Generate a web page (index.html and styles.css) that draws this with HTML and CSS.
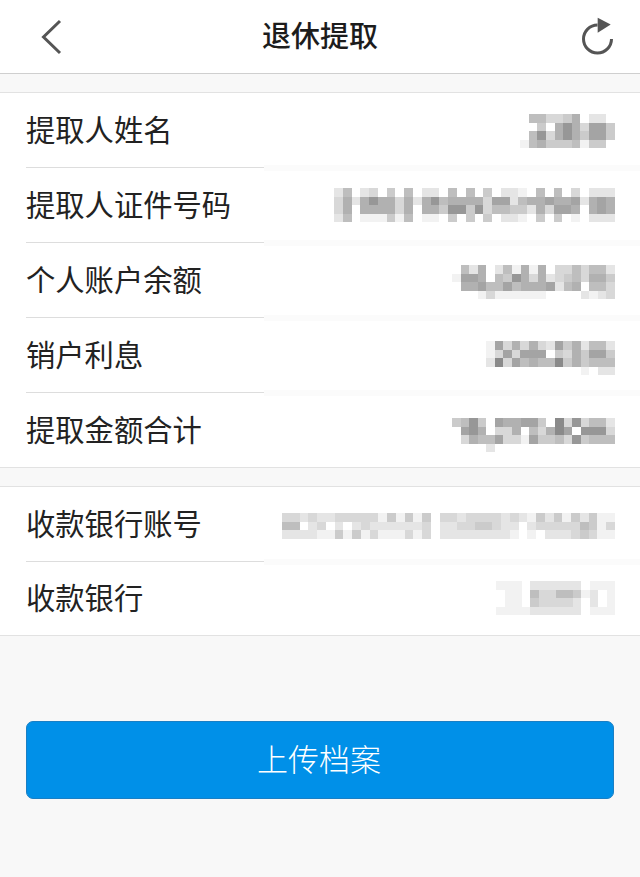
FILE: index.html
```html
<!DOCTYPE html>
<html>

<head lang="zh-CN">
    <meta charset="UTF-8">
    <title>退休提取</title>
    <link rel="stylesheet" href="styles.css">
    <script src="mosaic.js"></script>
</head>

<body>
    <div class="nav">
        <a class="nav_btn nav_back" href="javascript:">
            <svg width="24" height="36" viewBox="0 0 24 36">
                <path d="M20 2 L3.5 18 L20 34" fill="none" stroke="#555" stroke-width="3" />
            </svg>
        </a>
        <div class="nav_title">退休提取</div>
        <a class="nav_btn nav_refresh" href="javascript:">
            <svg width="34" height="40" viewBox="-1 1.5 34 40">
                <path d="M16.5 9.5 A14 14 0 1 0 30.5 23.5" fill="none" stroke="#555" stroke-width="3" />
                <path d="M16.7 2.3 L29.7 9 L16.7 17.3 Z" fill="#555" />
            </svg>
        </a>
    </div>

    <div class="group">
        <div class="row">
            <div class="label">提取人姓名</div>
            <div class="value">
                <div class="mosaic low_a" data-width="95"
                    data-rows="05533460220 00406863774 05836864774 15644451440"></div>
            </div>
        </div>
        <div class="row">
            <div class="label">提取人证件号码</div>
            <div class="value">
                <div class="mosaic" data-width="281"
                    data-rows="25023040502205050402210505030222 36268663626856666377256676672676 36066663606648848355442637760676 25011141501104040402210404010222"></div>
            </div>
        </div>
        <div class="row">
            <div class="label">个人账户余额</div>
            <div class="value">
                <div class="mosaic low_c" data-width="163"
                    data-rows="0526025161603353552 1776054863623453664 0667557566672560553 0001311111100002123"></div>
            </div>
        </div>
        <div class="row">
            <div class="label">销户利息</div>
            <div class="value">
                <div class="mosaic low_b" data-width="129"
                    data-rows="173636327462552 137377704364774 293756559464555 000000000001022"></div>
            </div>
        </div>
        <div class="row">
            <div class="label">提取金额合计</div>
            <div class="value">
                <div class="mosaic low_d" data-width="163"
                    data-rows="4584076677409383552 0786033605369708883 0365573317445384555 0000200000000000000"></div>
            </div>
        </div>
    </div>

    <div class="group group_second">
        <div class="row">
            <div class="label">收款银行账号</div>
            <div class="value">
                <div class="mosaic low_c" data-width="333"
                    data-rows="33232233333141414033233332321424142411 55023020232222223022334432202333335413 22221141413111313022222222101022234311"></div>
            </div>
        </div>
        <div class="row">
            <div class="label">收款银行</div>
            <div class="value">
                <div class="mosaic" data-width="119"
                    data-rows="11102222220111 01105335541201 01104333320201 11112222220111"></div>
            </div>
        </div>
    </div>

    <div class="btn_wrap">
        <a class="upload_btn" href="javascript:">上传档案</a>
    </div>
</body>

</html>
```

FILE: styles.css
```css
* {
    margin: 0;
    padding: 0;
    box-sizing: border-box;
}

body {
    background-color: #f8f8f8;
    font-family: "Noto Sans CJK SC", "Liberation Sans", sans-serif;
    color: #222;
}

a {
    text-decoration: none;
}

.nav {
    height: 74px;
    padding: 0 26px;
    display: grid;
    grid-template-columns: 1fr auto 1fr;
    align-items: center;
    background-color: #fff;
    border-bottom: 1px solid #cfcfcf;
}

.nav_btn {
    display: flex;
}

.nav_back {
    padding-left: 14px;
}

.nav_refresh {
    justify-content: flex-end;
}

.nav_title {
    padding-bottom: 5px;
    font-size: 29px;
    font-weight: 500;
    color: #1c1c1c;
}

.group {
    margin-top: 18px;
    background-color: #fff;
    border-top: 1px solid #e2e2e2;
    border-bottom: 1px solid #e2e2e2;
}

.row {
    height: 75px;
    padding-left: 26px;
    display: flex;
}

.group .row:last-child {
    height: 74px;
}

.group_second .row:last-child {
    height: 73px;
}

.label {
    width: 238px;
    font-size: 29.3px;
    line-height: 70px;
    border-bottom: 1px solid #ddd;
    white-space: nowrap;
}

.row:last-child .label {
    border-bottom: none;
}

.group_second .row:last-child .label {
    line-height: 68px;
}

.value {
    flex: 1;
    padding-right: 25px;
    display: flex;
    justify-content: flex-end;
    align-items: center;
    box-shadow: inset 0 -3px 0 #fbfbfb, 0 3px 0 #fbfbfb;
}

.row:last-child .value {
    box-shadow: none;
}

.mosaic svg {
    display: block;
    filter: blur(0.6px);
}

/* 马赛克在行内的上下偏移 */
.low_a {
    margin-top: 2px;
}

.low_b {
    margin-top: 6px;
}

.low_c {
    margin-top: 3px;
}

.low_d {
    margin-top: 10px;
}

.btn_wrap {
    padding: 85px 26px 78px;
}

.upload_btn {
    display: block;
    height: 78px;
    padding-right: 2px;
    line-height: 72px;
    text-align: center;
    font-size: 31px;
    font-weight: 300;
    color: #fff;
    background-color: #0090e8;
    border: 1px solid #1a7fc4;
    border-radius: 7px;
}
```

FILE: mosaic.js
```js
window.onload = function () {
    var boxes = document.getElementsByClassName('mosaic');
    var cell_height = 8.6;
    var ns = 'http://www.w3.org/2000/svg';

    for (var i = 0; i < boxes.length; i++) {
        // 每行一串数字，0是空白，数字越大灰度越深
        var rows = boxes[i].getAttribute('data-rows').split(' ');
        var cols = rows[0].length;
        var svg = document.createElementNS(ns, 'svg');
        svg.setAttribute('width', boxes[i].getAttribute('data-width'));
        svg.setAttribute('height', rows.length * cell_height);
        svg.setAttribute('viewBox', '0 0 ' + cols + ' ' + rows.length);
        svg.setAttribute('preserveAspectRatio', 'none');
        svg.setAttribute('shape-rendering', 'crispEdges');

        for (var y = 0; y < rows.length; y++) {
            for (var x = 0; x < rows[y].length; x++) {
                var level = Number(rows[y].charAt(x));
                if (level === 0) {
                    continue;
                }
                var gray = 255 - level * 13;
                var rect = document.createElementNS(ns, 'rect');
                rect.setAttribute('x', x);
                rect.setAttribute('y', y);
                rect.setAttribute('width', 1);
                rect.setAttribute('height', 1);
                rect.setAttribute('fill', 'rgb(' + gray + ',' + gray + ',' + gray + ')');
                svg.appendChild(rect);
            }
        }
        boxes[i].appendChild(svg);
    }
};
```
